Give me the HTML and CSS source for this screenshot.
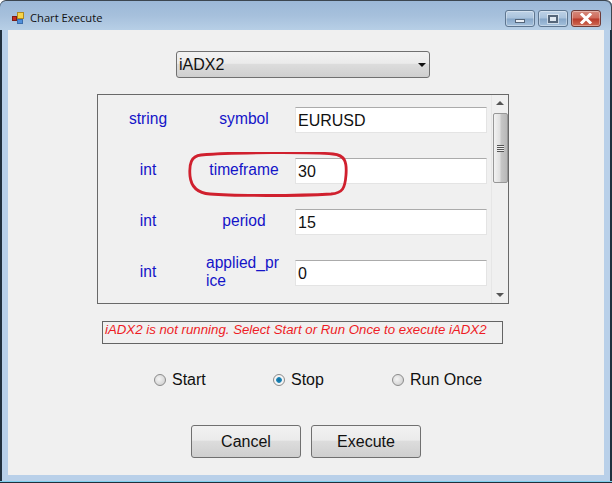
FILE: index.html
```html
<!DOCTYPE html>
<html lang="en">
<head>
  <meta charset="UTF-8" />
  <title>Chart Execute</title>
  <link rel="stylesheet" href="styles.css">
</head>
<body>
  <div class="window">
    <div class="titlebar">
      <svg class="app-icon" width="16" height="16" viewBox="0 0 16 16">
        <rect x="1.5" y="6.5" width="4" height="4" fill="#c62a20" stroke="#7d1c16"/>
        <rect x="6.5" y="2.5" width="6" height="6" fill="#f6d44a" stroke="#b08a20"/>
        <rect x="6.5" y="9.5" width="5" height="4" fill="#4f8fdc" stroke="#3a6cab"/>
      </svg>
      <span class="title">Chart Execute</span>
      <div class="caption-btns">
        <div class="cap-btn"><span class="min-glyph"></span></div>
        <div class="cap-btn"><span class="max-glyph"></span></div>
        <div class="cap-btn close">
          <svg width="14" height="11" viewBox="0 0 14 11">
            <path d="M3 1.5 L11 9.5 M11 1.5 L3 9.5" stroke="#fff" stroke-width="3" stroke-linecap="square"/>
          </svg>
        </div>
      </div>
    </div>

    <div class="client">
      <div class="combo">
        <span>iADX2</span>
        <span class="combo-arrow"></span>
      </div>

      <div class="panel">
        <div class="rows">
          <div class="row">
            <span class="lbl">string</span>
            <span class="lbl">symbol</span>
            <div class="field">EURUSD</div>
          </div>
          <div class="row">
            <span class="lbl">int</span>
            <span class="lbl">timeframe</span>
            <div class="field">30</div>
          </div>
          <div class="row">
            <span class="lbl">int</span>
            <span class="lbl">period</span>
            <div class="field">15</div>
          </div>
          <div class="row">
            <span class="lbl">int</span>
            <span class="lbl wrap">applied_pr<br>ice</span>
            <div class="field">0</div>
          </div>
        </div>
        <div class="scrollbar">
          <span class="arrow-up"></span>
          <div class="thumb">
            <span class="grip"></span>
          </div>
          <span class="arrow-down"></span>
        </div>
      </div>

      <div class="message">iADX2 is not running. Select Start or Run Once to execute iADX2</div>

      <div class="radios">
        <label class="radio"><span class="dot"></span>Start</label>
        <label class="radio"><span class="dot checked"></span>Stop</label>
        <label class="radio"><span class="dot"></span>Run Once</label>
      </div>

      <div class="buttons">
        <div class="btn">Cancel</div>
        <div class="btn">Execute</div>
      </div>
    </div>

    <!-- hand drawn marker over the timeframe row -->
    <svg class="marker" width="162" height="46" viewBox="0 0 162 46">
      <path d="M13 3 C45 0 125 0 145 2 C157 3 159 10 158 23 C157 36 155 41 143 42 C110 44 45 44 22 42 C8 41 3 34 2 24 C1 12 3 4 13 3 Z" fill="none" stroke="#d0202e" stroke-width="2.8"/>
    </svg>
  </div>
</body>
</html>
```

FILE: styles.css
```css
* {
  box-sizing: border-box;
}

html, body {
  margin: 0;
  padding: 0;
}

body {
  width: 612px;
  height: 483px;
  overflow: hidden;
  font-family: "Liberation Sans", Arial, sans-serif;
  background: #fff;
}

.window {
  position: relative;
  width: 612px;
  height: 483px;
  padding: 0 8px 7px;
  display: flex;
  flex-direction: column;
  background: #b9d0e9;
  border-top: 1px solid #3c4650;
  border-bottom: 1px solid #20303c;
  border-radius: 6px 6px 0 0;
  box-shadow: inset 0 -1px 0 #7fd0ee, inset 2px 0 0 #22303e, inset -2px 0 0 #22303e;
}

.titlebar {
  height: 29px;
  margin: 0 -8px;
  padding: 4px 11px 0 11px;
  display: flex;
  align-items: center;
  background: linear-gradient(to bottom, #9cb8d7 0, #a6c0dc 50%, #b7cfe6 100%);
  border-radius: 6px 6px 0 0;
  box-shadow: inset -1px 0 0 #3c4650;
}

.app-icon {
  flex: none;
}

.title {
  margin-left: 3px;
  font-family: "Open Sans", "Liberation Sans", sans-serif;
  font-size: 11.2px;
  color: #111;
}

.caption-btns {
  margin-left: auto;
  margin-top: 2px;
  display: flex;
  gap: 3px;
}

.cap-btn {
  width: 30px;
  height: 17px;
  display: flex;
  align-items: center;
  justify-content: center;
  border: 1px solid #5e7690;
  border-radius: 3px;
  background: linear-gradient(to bottom, #bed2e7 0, #a9c2dc 48%, #86a6c8 52%, #a5c1dc 100%);
  box-shadow: inset 0 0 0 1px rgba(255, 255, 255, 0.35);
}

.cap-btn.close {
  border-color: #6e3b38;
  background: linear-gradient(to bottom, #d58a7d 0, #cf6a5a 48%, #b8392a 52%, #cf6b55 100%);
}

.min-glyph {
  width: 10px;
  height: 4px;
  margin-top: 4px;
  background: #e8eef5;
  border: 1px solid #54657a;
}

.max-glyph {
  width: 10px;
  height: 8px;
  background: #dfe8f1;
  border: 2px solid #55667a;
  box-shadow: 0 0 0 1px rgba(255, 255, 255, 0.5);
}

.client {
  flex: 1;
  display: flex;
  flex-direction: column;
  align-items: flex-start;
  padding: 21px 0 0 89px;
  background: #f0f0f0;
}

.combo {
  width: 254px;
  height: 27px;
  margin-left: 79px;
  padding: 0 3px 0 2px;
  display: flex;
  align-items: center;
  justify-content: space-between;
  font-size: 16px;
  color: #111;
  border: 1px solid #707070;
  border-radius: 3px;
  background: linear-gradient(to bottom, #f2f2f2 0, #ebebeb 45%, #dcdcdc 50%, #cfcfcf 100%);
}

.combo-arrow {
  width: 0;
  height: 0;
  border-left: 4px solid transparent;
  border-right: 4px solid transparent;
  border-top: 4px solid #111;
}

.panel {
  width: 412px;
  height: 210px;
  margin-top: 16px;
  display: flex;
  justify-content: space-between;
  border: 1px solid #696969;
}

.rows {
  padding: 12px 0 0 0;
  display: flex;
  flex-direction: column;
  gap: 25px;
  flex: none;
  width: 390px;
}

.row {
  display: grid;
  grid-template-columns: 100px 92px 197px;
  grid-template-rows: 26px;
  align-items: center;
  text-align: center;
}

.lbl {
  margin-top: -3px;
  font-size: 15.6px;
  line-height: 18px;
  color: #1414c8;
}

.lbl.wrap {
  margin-top: -3px;
  padding-left: 8px;
  white-space: nowrap;
  text-align: left;
}

.field {
  height: 26px;
  margin-left: 5px;
  padding: 3px 0 0 2px;
  font-size: 16px;
  line-height: 19px;
  text-align: left;
  color: #111;
  background: #fff;
  border: 1px solid #e4e4e4;
  border-top-color: #ababab;
}

.scrollbar {
  width: 17px;
  display: flex;
  flex-direction: column;
  align-items: center;
  background: #f0f0f0;
  border-left: 1px solid #e6e6e6;
}

.arrow-up, .arrow-down {
  flex: none;
  width: 0;
  height: 0;
  border-left: 4px solid transparent;
  border-right: 4px solid transparent;
}

.arrow-up {
  margin-top: 6px;
  border-bottom: 4px solid #555;
}

.arrow-down {
  margin-top: auto;
  margin-bottom: 6px;
  border-top: 4px solid #555;
}

.thumb {
  width: 15px;
  height: 70px;
  margin-top: 8px;
  display: flex;
  align-items: center;
  justify-content: center;
  border: 1px solid #979797;
  border-radius: 2px;
  background: linear-gradient(to right, #f2f2f2 0, #e0e0e0 45%, #c6c6c6 55%, #b8b8b8 100%);
}

.grip {
  width: 7px;
  height: 7px;
  background: repeating-linear-gradient(to bottom, #555 0, #555 1px, #eee 1px, #eee 2px);
}

.message {
  width: 401px;
  height: 23px;
  margin: 17px 0 0 5px;
  padding: 0 0 0 2px;
  font-size: 13.25px;
  line-height: 16px;
  font-style: italic;
  color: #ee1c25;
  border: 1px solid #646464;
}

.radios {
  width: 100%;
  margin-top: 27px;
  display: grid;
  grid-template-columns: 119px 119px auto;
  padding-left: 57px;
}

.radio {
  display: flex;
  align-items: center;
  gap: 6px;
  font-size: 16px;
  line-height: 18px;
  color: #111;
}

.dot {
  width: 12px;
  height: 12px;
  border-radius: 50%;
  border: 1px solid #8b8b8b;
  background: radial-gradient(circle at 40% 40%, #f4f4f4 0, #c9c9c9 100%);
}

.dot.checked {
  background: radial-gradient(circle, #0f6c9c 0, #1d86b8 35%, #f4f4f4 45%, #f4f4f4 100%);
}

.buttons {
  margin: 36px 0 0 94px;
  display: flex;
  gap: 10px;
}

.btn {
  width: 110px;
  height: 33px;
  display: flex;
  align-items: center;
  justify-content: center;
  font-size: 16px;
  color: #111;
  border: 1px solid #707070;
  border-radius: 3px;
  background: linear-gradient(to bottom, #f2f2f2 0, #ebebeb 45%, #dcdcdc 50%, #cfcfcf 100%);
}

.marker {
  position: absolute;
  left: 188px;
  top: 151px;
}
```
